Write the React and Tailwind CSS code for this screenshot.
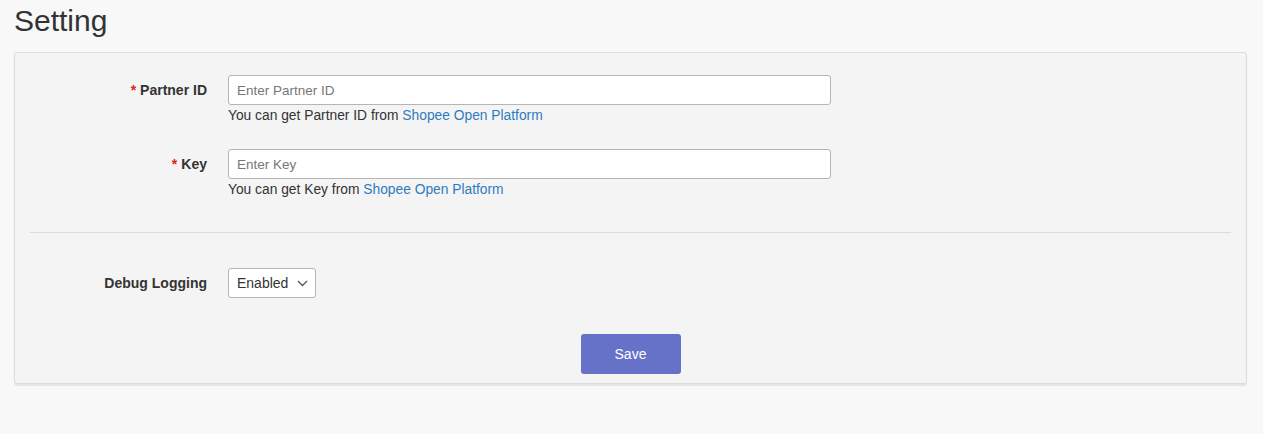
export default function App() {
  return (
    <div
      className="min-h-[434px] bg-[#f8f8f8] px-[14px] pt-[3px] text-[#333]"
      style={{ fontFamily: '"Liberation Sans", Arial, sans-serif' }}
    >
      {/* TITLE */}
      <h1 className="text-[30px] leading-[36px] font-normal text-[#333]">Setting</h1>

      {/* CARD */}
      <div className="mt-[13px] w-[1233px] rounded-[3px] border border-[#dcdcdc] bg-[#f4f4f4] shadow-[0_2px_1px_rgba(0,0,0,0.08)] pt-[22px] pb-[9px]">

        {/* PARTNER ID */}
        <div className="flex">
          <div className="w-[192px] h-[30px] flex items-center justify-end text-[14px] font-bold">
            <span className="text-[#e02020] mr-[4px]">*</span>
            Partner ID
          </div>
          <div className="ml-[21px]">
            <input
              placeholder="Enter Partner ID"
              className="w-[603px] h-[30px] rounded-[3px] border border-[#b5b5b5] bg-white px-[8px] text-[13.5px] text-[#333] placeholder:text-[#777] outline-none"
            />
            <p className="mt-[3px] text-[13.8px] leading-[16px]">
              You can get Partner ID from <a className="text-[#2f7bbf]">Shopee Open Platform</a>
            </p>
          </div>
        </div>

        {/* KEY */}
        <div className="flex mt-[25px]">
          <div className="w-[192px] h-[30px] flex items-center justify-end text-[14px] font-bold">
            <span className="text-[#e02020] mr-[4px]">*</span>
            Key
          </div>
          <div className="ml-[21px]">
            <input
              placeholder="Enter Key"
              className="w-[603px] h-[30px] rounded-[3px] border border-[#b5b5b5] bg-white px-[8px] text-[13.5px] text-[#333] placeholder:text-[#777] outline-none"
            />
            <p className="mt-[3px] text-[13.8px] leading-[16px]">
              You can get Key from <a className="text-[#2f7bbf]">Shopee Open Platform</a>
            </p>
          </div>
        </div>

        <div className="mx-[15px] mt-[34px] h-px bg-[#dcdcdc]"></div>

        {/* DEBUG LOGGING */}
        <div className="flex mt-[35px]">
          <div className="w-[192px] h-[30px] flex items-center justify-end text-[14px] font-bold">
            Debug Logging
          </div>
          <div className="ml-[21px]">
            <div className="w-[88px] h-[30px] rounded-[3px] border border-[#b5b5b5] bg-white flex items-center pl-[8px] text-[14px]">
              Enabled
              <svg className="ml-[9px]" width="11" height="7" viewBox="0 0 11 7" fill="none">
                <path d="M1 1l4.5 4.5L10 1" stroke="#555" strokeWidth="1.3" />
              </svg>
            </div>
          </div>
        </div>

        {/* SAVE */}
        <div className="flex justify-center mt-[36px]">
          <button className="w-[100px] h-[40px] rounded-[3px] bg-[#6672c8] text-white text-[14px]">
            Save
          </button>
        </div>
      </div>
    </div>
  );
}
